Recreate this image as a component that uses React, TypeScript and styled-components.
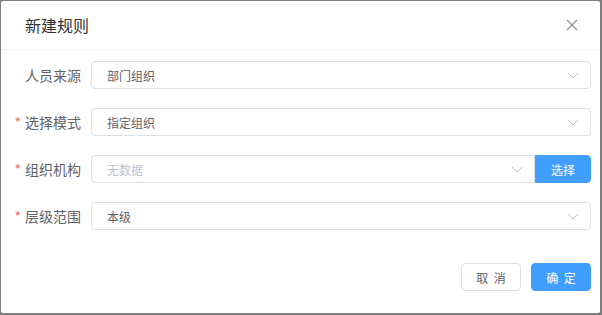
import React from 'react';
import styled, { createGlobalStyle } from 'styled-components';

const GlobalStyle = createGlobalStyle`
	html, body {
		margin: 0;
		padding: 0;
		background: #7f7f7f;
		font-family: "Noto Sans CJK SC", "Noto Sans", "Liberation Sans", sans-serif;
	}
	#root {
		width: 602px;
		height: 315px;
		padding: 1px 0 0 1px;
		box-sizing: border-box;
	}
`;

const Dialog = styled.div`
	width: 599px;
	height: 312px;
	background: #fff;
	border-radius: 2px;
	display: flex;
	flex-direction: column;
`;

const Header = styled.div`
	height: 48px;
	display: flex;
	align-items: center;
	justify-content: space-between;
	padding: 0 22px 0 24px;
	border-bottom: 1px solid #ebeef5;
`;

const Title = styled.span`
	font-size: 16px;
	color: #303133;
	line-height: 1;
`;

const Close = styled.button`
	border: 0;
	background: none;
	padding: 0;
	width: 12px;
	height: 12px;
	display: flex;
	cursor: pointer;
`;

const Form = styled.div`
	display: flex;
	flex-direction: column;
	gap: 19px;
	padding: 11px 9px 0 10px;
`;

const Row = styled.div`
	display: flex;
	align-items: center;
	height: 28px;
`;

const Label = styled.label<{ $required?: boolean }>`
	width: 70px;
	padding-right: 10px;
	text-align: right;
	font-size: 14px;
	color: #606266;
	white-space: nowrap;

	&::before {
		content: ${p => (p.$required ? "'*'" : "''")};
		color: #f56c6c;
		margin-right: 4px;
	}
`;

const Field = styled.div`
	flex: 1;
	display: flex;
	height: 28px;
`;

const Select = styled.div<{ $joined?: boolean }>`
	flex: 1;
	display: flex;
	align-items: center;
	justify-content: space-between;
	box-sizing: border-box;
	height: 28px;
	border: 1px solid #dcdfe6;
	border-radius: ${p => (p.$joined ? '4px 0 0 4px' : '4px')};
	padding: 0 11px 0 15px;
	font-size: 12px;
	color: #606266;
`;

const Placeholder = styled.span`
	color: #c0c4cc;
`;

const Button = styled.button<{ $primary?: boolean; $joined?: boolean }>`
	height: 28px;
	box-sizing: border-box;
	padding: 0;
	font-family: inherit;
	font-size: 12px;
	word-spacing: 3px;
	white-space: pre;
	border-radius: ${p => (p.$joined ? '0 4px 4px 0' : '4px')};
	border: 1px solid ${p => (p.$primary ? '#409eff' : '#dcdfe6')};
	background: ${p => (p.$primary ? '#409eff' : '#fff')};
	color: ${p => (p.$primary ? '#fff' : '#606266')};
	width: ${p => (p.$joined ? '56px' : '60px')};
	cursor: pointer;
`;

const Footer = styled.div`
	display: flex;
	justify-content: flex-end;
	gap: 10px;
	padding: 33px 9px 0 0;
`;

const Chevron = () => (
	<svg width="12" height="7" viewBox="0 0 12 7" fill="none">
		<path d="M1 1l5 5 5-5" stroke="#c0c4cc" strokeWidth="1" />
	</svg>
);

const CloseIcon = () => (
	<svg width="12" height="12" viewBox="0 0 12 12" fill="none">
		<path d="M1 1l10 10M11 1L1 11" stroke="#909399" strokeWidth="1.2" />
	</svg>
);

const App: React.FC = () => {
	return (
		<>
			<GlobalStyle />
			<Dialog>
				<Header>
					<Title>新建规则</Title>
					<Close aria-label="close">
						<CloseIcon />
					</Close>
				</Header>
				<Form>
					<Row>
						<Label>人员来源</Label>
						<Field>
							<Select>
								<span>部门组织</span>
								<Chevron />
							</Select>
						</Field>
					</Row>
					<Row>
						<Label $required>选择模式</Label>
						<Field>
							<Select>
								<span>指定组织</span>
								<Chevron />
							</Select>
						</Field>
					</Row>
					<Row>
						<Label $required>组织机构</Label>
						<Field>
							<Select $joined>
								<Placeholder>无数据</Placeholder>
								<Chevron />
							</Select>
							<Button $primary $joined>
								选择
							</Button>
						</Field>
					</Row>
					<Row>
						<Label $required>层级范围</Label>
						<Field>
							<Select>
								<span>本级</span>
								<Chevron />
							</Select>
						</Field>
					</Row>
				</Form>
				<Footer>
					<Button>取 消</Button>
					<Button $primary>确 定</Button>
				</Footer>
			</Dialog>
		</>
	);
};

export default App;
